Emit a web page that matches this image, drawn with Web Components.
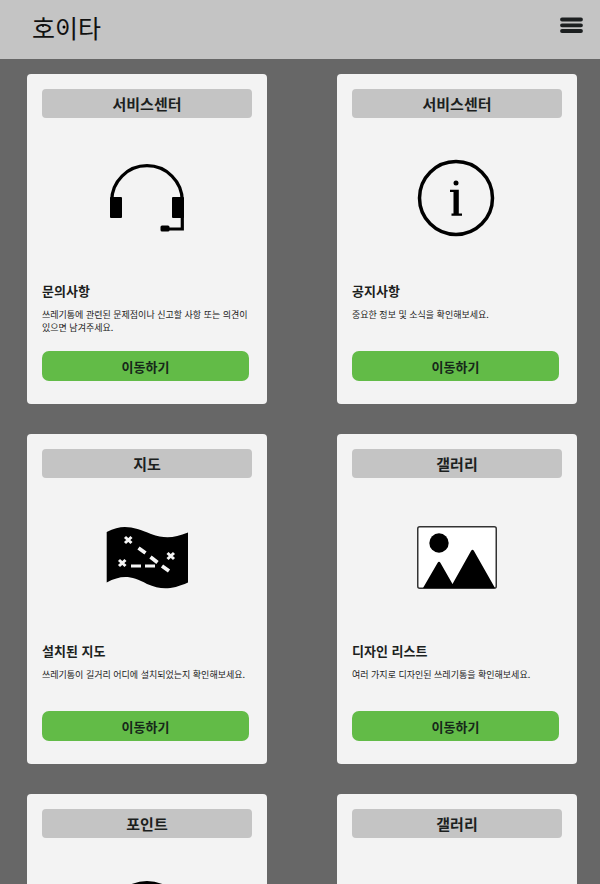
<!DOCTYPE html>
<html lang="ko">
<head>
<meta charset="utf-8">
<meta name="viewport" content="width=device-width, initial-scale=1">
<title>호이타</title>
<style>
body { margin: 0; background: #676767; color: #1c1f1e; font-family: "Noto Sans CJK KR", "Noto Sans", sans-serif; }
</style>
</head>
<body>
<hoita-header></hoita-header>
<card-grid>
  <service-card category="서비스센터" heading="문의사항"><service-icon slot="icon" name="headset"></service-icon>쓰레기통에 관련된 문제점이나 신고할 사항 또는 의견이 있으면 남겨주세요.</service-card>
  <service-card category="서비스센터" heading="공지사항"><service-icon slot="icon" name="info"></service-icon>중요한 정보 및 소식을 확인해보세요.</service-card>
  <service-card category="지도" heading="설치된 지도"><service-icon slot="icon" name="map"></service-icon>쓰레기통이 길거리 어디에 설치되었는지 확인해보세요.</service-card>
  <service-card category="갤러리" heading="디자인 리스트"><service-icon slot="icon" name="picture"></service-icon>여러 가지로 디자인된 쓰레기통을 확인해보세요.</service-card>
  <service-card category="포인트"><service-icon slot="icon" name="point"></service-icon></service-card>
  <service-card category="갤러리"></service-card>
</card-grid>
<script>
customElements.define('hoita-header', class extends HTMLElement {
  constructor() {
    super();
    this.attachShadow({ mode: 'open' }).innerHTML = `
      <style>
        :host { display: block; background: #c4c4c4; }
        header { display: flex; justify-content: space-between; align-items: flex-start; box-sizing: border-box; min-height: 59px; padding: 9px 17px 0 32px; }
        a { position: relative; color: #111; text-decoration: none; font-size: 25px; line-height: 36px; font-weight: 400; }
        a svg { position: absolute; left: 0; top: 0; }
        button { display: block; margin: 0; padding: 8px 0; border: 0; background: none; cursor: pointer; }
        svg { display: block; }
      </style>
      <header>
        <a href="#">호이타<svg width="70" height="36" aria-hidden="true"><circle cx="11" cy="17" r="1"/><circle cx="32" cy="18" r="1.5"/></svg></a>
        <button type="button" aria-label="메뉴"><svg width="23" height="17" viewBox="0 0 23 17"><path d="M2 2.5H21M2 8.3H21M2 14H21" stroke="#1c1f20" stroke-width="3.8" stroke-linecap="round"/></svg></button>
      </header>`;
  }
});

customElements.define('card-grid', class extends HTMLElement {
  constructor() {
    super();
    this.attachShadow({ mode: 'open' }).innerHTML = `
      <style>
        :host { display: grid; grid-template-columns: repeat(auto-fill, 240px); justify-content: space-between; gap: 30px; padding: 15px 23px 30px 27px; }
      </style>
      <slot></slot>`;
  }
});

customElements.define('service-card', class extends HTMLElement {
  constructor() {
    super();
    const heading = this.getAttribute('heading');
    this.attachShadow({ mode: 'open' }).innerHTML = `
      <style>
        :host { display: flex; flex-direction: column; box-sizing: border-box; min-height: 330px; padding: 15px; border-radius: 4px; background: #f3f3f3; }
        h2 { margin: 0; border-radius: 4px; background: #c4c4c4; text-align: center; font-size: 15px; line-height: 29px; font-weight: 700; }
        .art { display: flex; justify-content: center; height: 160px; }
        h3 { margin: 3px 0 0; font-size: 13px; line-height: 20px; font-weight: 700; }
        p { margin: 7px 0 0; min-height: 26px; font-size: 9px; line-height: 13px; color: #222; word-break: keep-all; }
        button { margin: 17px 3px 0 0; padding: 2px 0 0; border: 0; border-radius: 7px; background: #62bb47; color: #16281a; font: 700 13px/28px "Noto Sans CJK KR", "Noto Sans", sans-serif; cursor: pointer; }
      </style>
      <h2>${this.getAttribute('category')}</h2>
      <div class="art"><slot name="icon"></slot></div>
      ${heading ? `<h3>${heading}</h3><p><slot></slot></p><button type="button">이동하기</button>` : ''}`;
  }
});

const drawings = {
  headset: `<path d="M36.7 84V83A35.3 35.3 0 0 1 107.3 83V111H89" fill="none" stroke="#000" stroke-width="3.2"/>
    <rect x="35" y="79" width="12" height="21" rx="1"/><rect x="97" y="79" width="12" height="21" rx="1"/><rect x="85.5" y="107.5" width="9" height="6" rx="1.5"/>`,
  info: `<circle cx="71" cy="80" r="36.5" fill="none" stroke="#000" stroke-width="3.5"/>
    <circle cx="71" cy="65" r="2.5"/><path d="M65 71.8H73.8V95.5H77V97.8H66.500V95.500H68.5V74H65Z"/>`,
  map: `<path d="M31.7 54C49 45 60 50 76 56C90 61 99 60 113 54.5V104.5C96 112 86 112 72 106C56 97 46 97 31.7 104.5Z"/>
    <g fill="none" stroke="#f5f5f5" stroke-width="3"><path d="M50 59L56.5 65M56.5 59L50 65M92.5 75L99 81M99 75L92.5 81M44 82L50.5 88M50.5 82L44 88"/>
    <path d="M63.5 70L70.5 75M75.5 79L82.5 84.5M87 88L94 93" stroke-width="3.8"/><path d="M56 88H66M70 88H80"/></g>`,
  picture: `<rect x="32.75" y="48.75" width="78.5" height="61.5" rx="2" fill="#fff" stroke="#333" stroke-width="1.5"/>
    <circle cx="54" cy="65" r="9.7"/><path d="M38 110L52.5 85Q54 82.5 55.500 85L67.5 106L86 73Q87.5 70.5 89 73L110 110Z"/>`,
  point: `<circle cx="72" cy="81" r="32" fill="none" stroke="#000" stroke-width="12"/>`
};

customElements.define('service-icon', class extends HTMLElement {
  constructor() {
    super();
    this.attachShadow({ mode: 'open' }).innerHTML = `
      <style>:host { display: block; } svg { display: block; }</style>
      <svg width="144" height="160" viewBox="0 0 144 160" aria-hidden="true">${drawings[this.getAttribute('name')]}</svg>`;
  }
});
</script>
</body>
</html>
